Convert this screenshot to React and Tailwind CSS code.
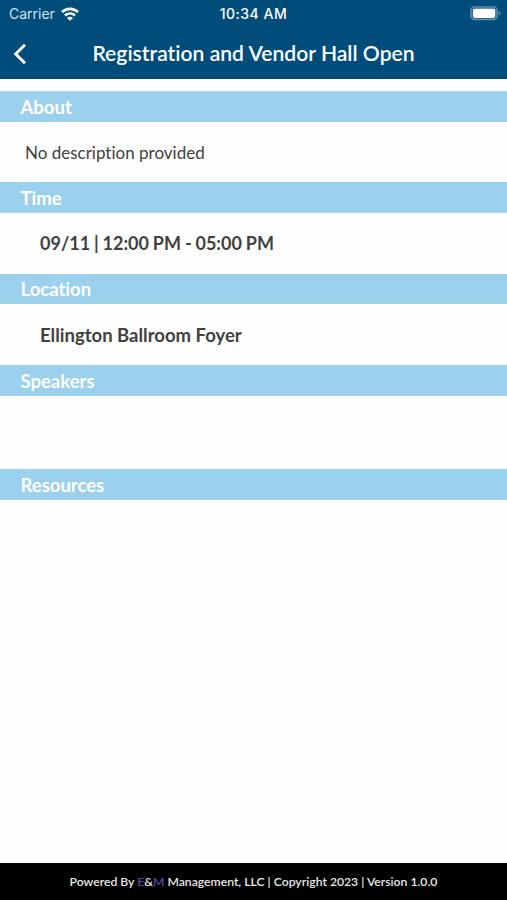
function StatusBar() {
  return (
    <div className="grid h-7 grid-cols-3 items-center font-['Inter',sans-serif] text-[14px] leading-none text-white">
      <div className="flex items-center gap-[6px] pl-[9px]">
        <span className="text-[#d5e3ec]">Carrier</span>
        <svg className="-mt-px" width="18" height="14" viewBox="0 0 18 14" fill="none" stroke="white" strokeWidth="2.6">
          <path d="M1 5.1C5.5.8 12.5.8 17 5.1" />
          <path d="M4 8.5C6.9 5.8 11.1 5.8 14 8.5" />
          <path d="M9 13.8 6 10.9C7.8 9.4 10.2 9.4 12 10.9Z" fill="white" stroke="none" />
        </svg>
      </div>
      <span className="text-center font-medium tracking-[0.5px]">10:34 AM</span>
      <div className="flex justify-end pr-[6px] pb-px">
        <svg width="31" height="15" viewBox="0 0 31 15">
          <rect x="0.8" y="0.8" width="26.4" height="12.9" rx="3.6" fill="#2f6d94" stroke="#5f91b1" strokeWidth="1.3" />
          <rect x="3" y="2.7" width="22.2" height="9.2" rx="1.8" fill="white" />
          <path d="M28.6 5.2Q30.5 5.8 30.5 7.3Q30.5 8.8 28.6 9.4Z" fill="#5f91b1" />
        </svg>
      </div>
    </div>
  );
}

function SectionHeading({ children }) {
  return (
    <h2 className="flex h-[30.5px] items-center bg-[#9bd1ed] pt-[1.5px] pl-[20.5px] text-[18.5px] font-bold leading-none text-white">
      {children}
    </h2>
  );
}

export default function App() {
  return (
    <div className="flex h-[900px] w-[507px] flex-col overflow-hidden bg-[#fefefe] font-['Lato',sans-serif] [font-variant-ligatures:none]">
      <header className="h-[79px] shrink-0 bg-[#004d7b]">
        <StatusBar />
        <div className="flex h-[51px] items-center">
          <button className="ml-[13px] w-4" aria-label="Back">
            <svg width="15" height="22" viewBox="0 0 15 22" fill="none" stroke="white" strokeWidth="2.9">
              <path d="M12 1.8 2.7 11 12 20.2" />
            </svg>
          </button>
          <h1 className="flex-1 whitespace-nowrap pr-[29px] pb-[2px] text-center text-[21.1px] font-semibold leading-none text-white">
            Registration and Vendor Hall Open
          </h1>
        </div>
      </header>
      <main className="flex-1 pt-3 text-[#414141]">
        <SectionHeading>About</SectionHeading>
        <p className="flex h-[60.5px] items-center pt-px pl-[25px] text-[17px] leading-none">No description provided</p>
        <SectionHeading>Time</SectionHeading>
        <p className="flex h-[61px] items-center pl-10 text-[18px] font-bold leading-none [word-spacing:-0.5px]">09/11 | 12:00 PM - 05:00 PM</p>
        <SectionHeading>Location</SectionHeading>
        <p className="flex h-[61px] items-center pt-[1.5px] pl-10 text-[18.5px] font-bold leading-none">Ellington Ballroom Foyer</p>
        <SectionHeading>Speakers</SectionHeading>
        <div className="h-[73.5px]" />
        <SectionHeading>Resources</SectionHeading>
      </main>
      <footer className="flex h-[37px] shrink-0 items-center justify-center bg-black pt-[1.5px] text-[12.2px] font-semibold leading-none text-[#e8e8e8]">
        <p>
          Powered By <span className="text-[#554a9c]">E</span>&amp;<span className="text-[#554a9c]">M</span> Management, LLC | Copyright 2023 | Version 1.0.0
        </p>
      </footer>
    </div>
  );
}
